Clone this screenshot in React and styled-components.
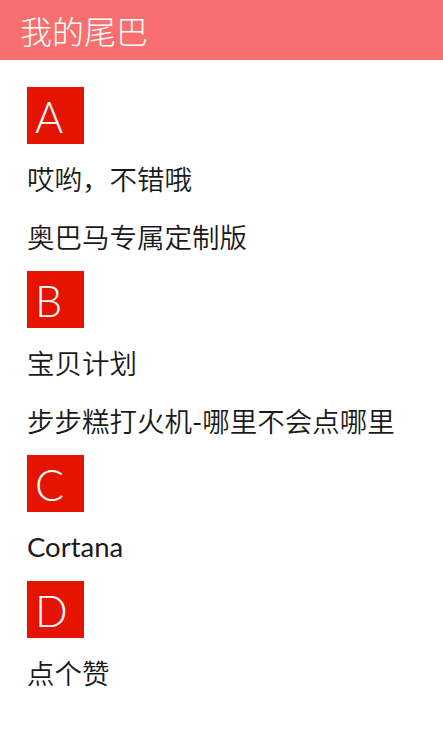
import React from "react";
import styled, { createGlobalStyle } from "styled-components";

const Global = createGlobalStyle`
  html, body { margin: 0; padding: 0; background: #ffffff; }
  body { font-family: "Noto Sans CJK SC", "Noto Sans", sans-serif; }
  * { box-sizing: border-box; }
`;

const Page = styled.div`
  width: 443px;
  min-height: 738px;
  background: #ffffff;
  display: flex;
  flex-direction: column;
`;

const Header = styled.header`
  height: 60px;
  background: #f7706f;
  display: flex;
  align-items: center;
  padding-left: 20px;
`;

const Title = styled.h1`
  margin: 0;
  font-family: "Noto Sans CJK SC Light", "Noto Sans CJK SC DemiLight", "Noto Sans CJK SC", sans-serif;
  font-weight: 300;
  font-size: 32px;
  line-height: 1;
  color: #ffffff;
`;

const List = styled.main`
  display: flex;
  flex-direction: column;
  padding: 27px 0 0 27px;
`;

const Group = styled.section`
  display: flex;
  flex-direction: column;
  margin-bottom: 4px;
`;

const Badge = styled.div`
  width: 57px;
  height: 57px;
  background: #e51400;
  color: #ffffff;
  font-family: Lato, "Open Sans", sans-serif;
  font-weight: 300;
  font-size: 43px;
  line-height: 54px;
  padding: 3px 0 0 8px;
  margin-bottom: 7px;
`;

const Item = styled.div`
  height: 58px;
  display: flex;
  align-items: center;
  padding-bottom: 4px;
  font-family: Lato, "Noto Sans CJK SC DemiLight", "Noto Sans CJK SC", sans-serif;
  font-size: 27.5px;
  color: #1a1a1a;
  white-space: nowrap;
`;

const data = [
  { key: "A", items: ["哎哟，不错哦", "奥巴马专属定制版"] },
  { key: "B", items: ["宝贝计划", "步步糕打火机-哪里不会点哪里"] },
  { key: "C", items: ["Cortana"] },
  { key: "D", items: ["点个赞"] },
];

export default function App() {
  return (
    <>
      <Global />
      <Page>
        <Header>
          <Title>我的尾巴</Title>
        </Header>
        <List>
          {data.map((g) => (
            <Group key={g.key}>
              <Badge>{g.key}</Badge>
              {g.items.map((t) => (
                <Item key={t}>{t}</Item>
              ))}
            </Group>
          ))}
        </List>
      </Page>
    </>
  );
}
